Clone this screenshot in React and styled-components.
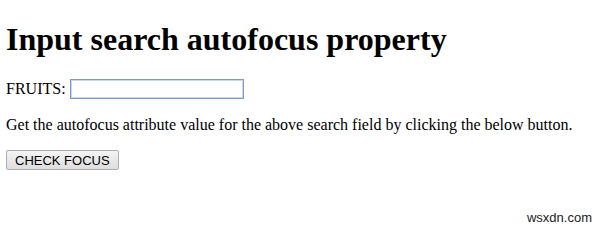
import React from 'react'
import styled, { createGlobalStyle } from 'styled-components'

const GlobalStyle = createGlobalStyle`
body {
  margin: 6px;
  font-family: "Liberation Serif", "Times New Roman", serif;
  font-size: 16px;
  color: #000;
  background: #fff;
}
`

const Page = styled.div`
  position: relative;
  display: flow-root;
  height: 221px;
`

const Title = styled.h1`
  font-size: 32px;
  font-weight: bold;
  margin: 15px 0 21px;
`

const Field = styled.div`
  display: flex;
  align-items: center;
  gap: 4px;
`

const Label = styled.span``

const SearchBox = styled.input`
  box-sizing: border-box;
  width: 174px;
  height: 20px;
  padding: 1px 3px;
  border: 1px solid #7a9cc6;
  box-shadow: inset 0 0 0 1px #c8d7ea;
  outline: none;
  font: inherit;
`

const Text = styled.p`
  margin: 17px 0 16px;
`

const Button = styled.button`
  font-family: "Liberation Sans", Arial, sans-serif;
  font-size: 13px;
  padding: 1px 8px;
  height: 20px;
  border: 1px solid #adadad;
  border-radius: 2px;
  background: linear-gradient(#f4f4f4, #dedede);
  color: #000;
`

const Watermark = styled.span`
  position: absolute;
  right: 2px;
  bottom: 2px;
  font-family: "Liberation Sans", Arial, sans-serif;
  font-size: 13px;
  color: #222;
`

const App = () => {
  return (
    <Page>
      <GlobalStyle />
      <Title>Input search autofocus property</Title>
      <Field>
        <Label>FRUITS:</Label>
        <SearchBox type="search" autoFocus />
      </Field>
      <Text>Get the autofocus attribute value for the above search field by clicking the below button.</Text>
      <Button>CHECK FOCUS</Button>
      <Watermark>wsxdn.com</Watermark>
    </Page>
  )
}

export default App
